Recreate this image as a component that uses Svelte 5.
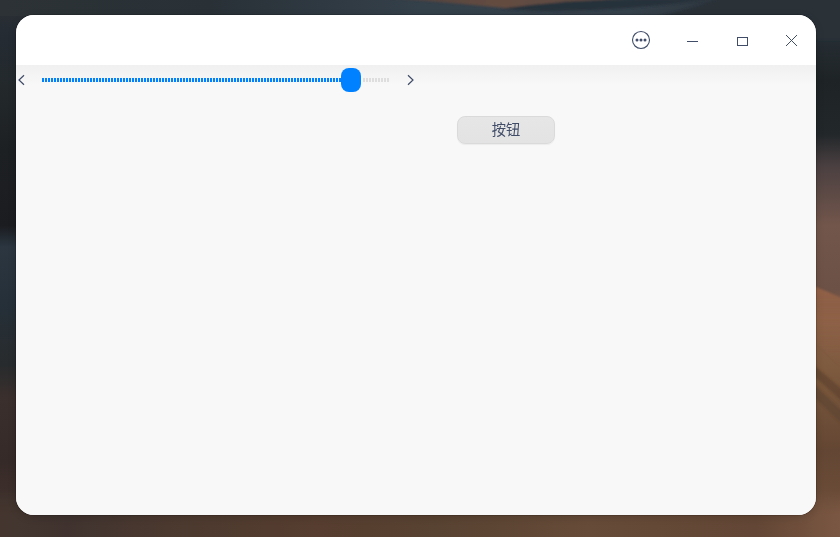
<script>
  let value = $state(89);
  let travel = $derived(299 + (value - 89) * 3);
</script>

<main class="desktop">
  <svg class="wallpaper" viewBox="0 0 840 537" aria-hidden="true">
    <defs>
      <linearGradient id="left" x2="0" y2="1">
        <stop offset="0" stop-color="#2b3034" />
        <stop offset=".07" stop-color="#242b33" />
        <stop offset=".16" stop-color="#23292b" />
        <stop offset=".28" stop-color="#1d2023" />
        <stop offset=".42" stop-color="#1b1c20" />
        <stop offset=".46" stop-color="#2b3640" />
        <stop offset=".56" stop-color="#253039" />
        <stop offset=".68" stop-color="#282b2d" />
        <stop offset=".74" stop-color="#3a2f2d" />
        <stop offset=".86" stop-color="#362a28" />
        <stop offset="1" stop-color="#46362f" />
      </linearGradient>
      <linearGradient id="right" x2="0" y2="1">
        <stop offset="0" stop-color="#2c343c" />
        <stop offset=".08" stop-color="#252c32" />
        <stop offset=".15" stop-color="#1e2425" />
        <stop offset=".25" stop-color="#22272a" />
        <stop offset=".31" stop-color="#4b4041" />
        <stop offset=".42" stop-color="#72564b" />
        <stop offset=".54" stop-color="#6c5146" />
        <stop offset=".59" stop-color="#8a6048" />
        <stop offset=".69" stop-color="#7d5a3e" />
        <stop offset=".84" stop-color="#634633" />
        <stop offset="1" stop-color="#70513d" />
      </linearGradient>
      <linearGradient id="top">
        <stop offset="0" stop-color="#2c3235" />
        <stop offset=".25" stop-color="#293137" />
        <stop offset=".5" stop-color="#34404a" />
        <stop offset=".75" stop-color="#35414b" />
        <stop offset=".9" stop-color="#2a3238" />
        <stop offset="1" stop-color="#2c343c" />
      </linearGradient>
      <linearGradient id="bottom">
        <stop offset="0" stop-color="#44362f" />
        <stop offset=".08" stop-color="#40332f" />
        <stop offset=".2" stop-color="#4b392f" />
        <stop offset=".38" stop-color="#563d2f" />
        <stop offset=".52" stop-color="#584231" />
        <stop offset=".7" stop-color="#664b38" />
        <stop offset=".9" stop-color="#634635" />
        <stop offset="1" stop-color="#7a5742" />
      </linearGradient>
      <linearGradient id="dune"><stop stop-color="#4a3f3e" /><stop offset=".45" stop-color="#644c41" /><stop offset="1" stop-color="#5a4a45" /></linearGradient>
      <linearGradient id="slope" x2="0" y2="1"><stop stop-color="#956347" /><stop offset="1" stop-color="#8a6045" stop-opacity="0" /></linearGradient>
      <linearGradient id="fade" x2="0" y2="1"><stop stop-color="#000" /><stop offset="1" stop-color="#fff" /></linearGradient>
      <mask id="rise" maskUnits="userSpaceOnUse" x="0" y="490" width="840" height="47">
        <rect y="490" width="840" height="24" fill="url(#fade)" />
        <rect y="514" width="840" height="23" fill="#fff" />
      </mask>
      <filter id="soft"><feGaussianBlur stdDeviation="1.3" /></filter>
    </defs>
    <rect width="420" height="537" fill="url(#left)" />
    <rect x="420" width="420" height="537" fill="url(#right)" />
    <rect width="840" height="16" fill="url(#top)" />
    <rect y="490" width="840" height="47" fill="url(#bottom)" mask="url(#rise)" />
    <g filter="url(#soft)">
      <path d="M390-2 450 3 505 8 560 4 625-2Z" fill="url(#dune)" />
      <path d="M500 9Q570-1 640-1L710-1Q630 11 545 11Z" fill="#27313a" />
      <path d="M660 16Q695 8 720-2L844-2V40H816L810 16Z" fill="#293138" />
      <path d="M814 286 844 299V370L814 340Z" fill="url(#slope)" />
      <path d="M814 365 844 391V403L814 376Z" fill="#60442f" opacity=".7" />
      <path d="M814 384 844 413V426L814 397Z" fill="#5b4331" opacity=".6" />
    </g>
  </svg>

  <section class="window">
    <header>
      <button class="control" aria-label="菜单">
        <svg width="20" height="20" viewBox="0 0 20 20">
          <circle cx="10" cy="10" r="8.5" fill="none" stroke="#414d68" stroke-width="1.1" />
          <g fill="#414d68"><circle cx="6" cy="10" r="1.5" /><circle cx="10" cy="10" r="1.5" /><circle cx="14" cy="10" r="1.5" /></g>
        </svg>
      </button>
      <button class="control" aria-label="最小化">
        <svg width="20" height="20" viewBox="0 0 20 20" shape-rendering="crispEdges"><path d="M6 11h11v1H6z" fill="#414d68" /></svg>
      </button>
      <button class="control" aria-label="最大化">
        <svg width="20" height="20" viewBox="0 0 20 20" shape-rendering="crispEdges"><rect x="6.5" y="7.5" width="10" height="8" fill="none" stroke="#414d68" /></svg>
      </button>
      <button class="control" aria-label="关闭">
        <svg width="20" height="20" viewBox="0 0 20 20" shape-rendering="crispEdges"><path d="m5.5 5.5 10 10m0-10-10 10" fill="none" stroke="#414d68" stroke-linecap="square" /></svg>
      </button>
    </header>

    <div class="content">
      <div class="slider">
        <button class="step" aria-label="减少" onclick={() => (value = Math.max(0, value - 1))}>
          <svg width="10" height="14" viewBox="0 0 10 14"><path d="M8 2.2 3 7l5 4.8" /></svg>
        </button>
        <div class="track">
          <div class="filled" style="width: {travel}px"></div>
          <div class="handle"></div>
          <div class="rest"></div>
        </div>
        <button class="step" aria-label="增加" onclick={() => (value = Math.min(98, value + 1))}>
          <svg width="10" height="14" viewBox="0 0 10 14"><path d="m2 2.2 5 4.8-5 4.8" /></svg>
        </button>
      </div>
      <div class="action"><button class="push">按钮</button></div>
    </div>
  </section>
</main>

<style>
  :global(body) { margin: 0; overflow: hidden; }
  .desktop {
    position: relative;
    box-sizing: border-box;
    width: 840px;
    height: 537px;
    padding: 15px 24px 22px 16px;
  }
  .wallpaper { position: absolute; inset: 0; width: 840px; height: 537px; }
  .window {
    position: relative;
    display: flex;
    flex-direction: column;
    width: 800px;
    height: 500px;
    overflow: hidden;
    border-radius: 18px;
    background: #f8f8f8;
    box-shadow: 0 0 0 1px rgb(0 0 0 / 15%), 0 2px 8px rgb(0 0 0 / 15%);
  }
  header {
    display: flex;
    justify-content: flex-end;
    height: 50px;
    background: #fff;
  }
  button { padding: 0; border: 0; background: none; }
  svg { display: block; }
  .control {
    display: flex;
    align-items: center;
    justify-content: center;
    width: 50px;
    height: 50px;
  }
  .content {
    display: flex;
    flex: 1;
    align-items: flex-start;
    background: linear-gradient(#f0f0f0, #f8f8f8 20px);
  }
  .slider {
    display: flex;
    align-items: center;
    justify-content: space-between;
    width: 400px;
    height: 30px;
  }
  .step { width: 10px; height: 14px; }
  .step path { fill: none; stroke: #414d68; stroke-width: 1.2; }
  .track {
    display: flex;
    align-items: center;
    width: 348px;
    height: 24px;
  }
  .filled, .rest { height: 4px; }
  .filled { background: repeating-linear-gradient(90deg, #0081ff 0 2px, transparent 2px 3px); }
  .rest { flex: 1; margin-left: 2px; background: repeating-linear-gradient(90deg, #dedede 0 2px, transparent 2px 3px); }
  .handle { width: 20px; height: 24px; border-radius: 8px; background: #0081ff; }
  .action { padding: 51px 0 0 41px; }
  .push {
    box-sizing: border-box;
    width: 98px;
    height: 28px;
    padding-bottom: 2px;
    border: 1px solid #dadada;
    border-radius: 8px;
    background: linear-gradient(#e6e6e6, #e3e3e3);
    box-shadow: 0 1px 1px rgb(0 0 0 / 5%);
    color: #414d68;
    font: 14.3px/24px "Noto Sans CJK SC", sans-serif;
  }
</style>
